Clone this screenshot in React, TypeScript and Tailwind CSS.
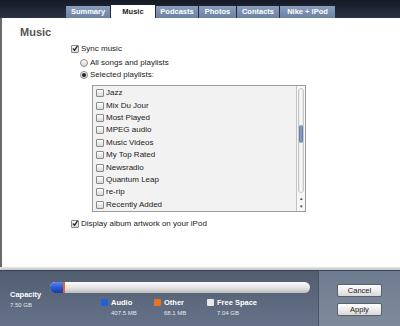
import React from "react";

const tabs = [
  { name: "Summary", w: "w-[44px]" },
  { name: "Music", w: "w-[44px]" },
  { name: "Podcasts", w: "w-[42px]" },
  { name: "Photos", w: "w-[37px]" },
  { name: "Contacts", w: "w-[42px]" },
  { name: "Nike + iPod", w: "w-[55px]" },
];

const playlists = [
  "Jazz",
  "Mix Du Jour",
  "Most Played",
  "MPEG audio",
  "Music Videos",
  "My Top Rated",
  "Newsradio",
  "Quantum Leap",
  "re-rip",
  "Recently Added",
];

function CheckBox({ checked }: { checked?: boolean }) {
  return (
    <span className="w-[8px] h-[8px] border border-[#8a8a8a] rounded-[1px] bg-gradient-to-b from-white to-[#d8d8d8] flex items-center justify-center shrink-0">
      {checked && (
        <svg width="7" height="7" viewBox="0 0 7 7">
          <path d="M1 3.5 L3 5.5 L6.5 0.5" stroke="#1d2a44" strokeWidth="1.6" fill="none" />
        </svg>
      )}
    </span>
  );
}

function Radio({ on }: { on?: boolean }) {
  return (
    <span className="w-[8px] h-[8px] rounded-full border border-[#8a8a8a] bg-gradient-to-b from-white to-[#d5d5d5] flex items-center justify-center shrink-0">
      {on && <span className="w-[4px] h-[4px] rounded-full bg-[#222]" />}
    </span>
  );
}

function Legend({ color, label, size }: { color: string; label: string; size: string }) {
  return (
    <div className="flex gap-[3px] w-[53px]">
      <span className={`w-[7px] h-[7px] mt-[1px] rounded-[1px] ${color}`} />
      <div className="flex flex-col">
        <span className="text-[7.5px] font-bold text-white leading-[9px]">{label}</span>
        <span className="text-[6px] text-[#e4e8ee] leading-[8px] mt-[2px]">{size}</span>
      </div>
    </div>
  );
}

export default function App() {
  return (
    <div className="w-[400px] h-[326px] flex flex-col bg-white overflow-hidden" style={{ fontFamily: '"Liberation Sans", Arial, sans-serif' }}>
      {/* tab strip */}
      <div className="h-[18px] bg-gradient-to-b from-[#151a26] to-[#2b3244] flex items-end pl-[66px] gap-[1px] shrink-0">
        {tabs.map((t) =>
          t.name === "Music" ? (
            <div key={t.name} className={`${t.w} h-[13px] bg-white text-[#1e1e1e] text-[7.5px] font-bold flex items-center justify-center`}>
              {t.name}
            </div>
          ) : (
            <div key={t.name} className={`${t.w} h-[12px] bg-gradient-to-b from-[#8a9dbb] to-[#6c82a4] text-white text-[7.5px] font-bold flex items-center justify-center`}>
              {t.name}
            </div>
          )
        )}
      </div>

      {/* main pane */}
      <div className="flex-1 border-l-2 border-[#6a6a6a] flex flex-col text-[#1a1a1a] text-[8px]">
        <div className="pl-[18px] pt-[8px] text-[11px] font-bold text-[#555] leading-[13px]">Music</div>

        <div className="pl-[69px] flex flex-col">
          <div className="flex items-center gap-[2px] mt-[4px] h-[11px]">
            <CheckBox checked />
            <span>Sync music</span>
          </div>
          <div className="pl-[9px] flex flex-col">
            <div className="flex items-center gap-[2px] h-[13px] mt-[2px]">
              <Radio />
              <span>All songs and playlists</span>
            </div>
            <div className="flex items-center gap-[2px] h-[12px]">
              <Radio on />
              <span>Selected playlists:</span>
            </div>

            <div className="ml-[12px] mt-[4px] w-[214px] h-[127px] border border-[#9c9c9c] bg-[#f2f2f2] flex">
              <div className="flex-1 flex flex-col pl-[3px] pt-[1px]">
                {playlists.map((p) => (
                  <div key={p} className="flex items-center gap-[2px] h-[12.5px]">
                    <CheckBox />
                    <span>{p}</span>
                  </div>
                ))}
              </div>
              {/* scrollbar */}
              <div className="w-[9px] border-l border-[#c4c4c4] bg-[#f6f6f6] flex flex-col items-center py-[2px]">
                <div className="w-[6px] flex-1 rounded-[3px] bg-gradient-to-r from-[#e2e2e2] via-white to-[#e2e2e2] border border-[#c8c8c8] flex flex-col pt-[36px]">
                  <div className="h-[18px] rounded-[3px] bg-gradient-to-r from-[#5873a3] via-[#8fa7cf] to-[#5873a3]" />
                </div>
                <div className="flex flex-col items-center gap-[3px] mt-[3px] text-[5px] leading-[5px] text-[#444]">
                  <span>▴</span>
                  <span>▾</span>
                </div>
              </div>
            </div>
          </div>

          <div className="flex items-center gap-[2px] mt-[6px] h-[11px]">
            <CheckBox checked />
            <span>Display album artwork on your iPod</span>
          </div>
        </div>
      </div>

      <div className="h-[3px] bg-gradient-to-b from-[#e6e6e6] to-[#c6c6c6] shrink-0" />

      {/* capacity panel */}
      <div className="h-[56px] flex shrink-0 border-t border-[#3a4252]">
        <div className="w-[318px] bg-gradient-to-b from-[#515d70] to-[#667288] flex pt-[11px] pl-[10px]">
          <div className="flex flex-col w-[40px] pt-[8px]">
            <span className="text-[7.5px] font-bold text-white leading-[9px]">Capacity</span>
            <span className="text-[6px] text-[#e4e8ee] leading-[8px] mt-[2px]">7.50 GB</span>
          </div>
          <div className="flex flex-col">
            <div className="w-[260px] h-[11px] rounded-full bg-gradient-to-b from-[#fafafa] via-[#e6e6e6] to-[#bdbdbd] flex overflow-hidden">
              <div className="w-[13px] h-full bg-gradient-to-b from-[#5d86e8] via-[#2a5ad6] to-[#1a3c9e]" />
              <div className="w-[2px] h-full bg-[#e5661a]" />
            </div>
            <div className="flex pl-[51px] mt-[5px]">
              <Legend color="bg-[#1f5fe0]" label="Audio" size="407.5 MB" />
              <Legend color="bg-[#e8731e]" label="Other" size="68.1 MB" />
              <Legend color="bg-[#e8e8e8]" label="Free Space" size="7.04 GB" />
            </div>
          </div>
        </div>
        <div className="flex-1 bg-gradient-to-b from-[#6f7b8e] to-[#7f8b9d] border-l border-[#4a5466] flex flex-col items-center pt-[13px] gap-[6px]">
          <button className="w-[45px] h-[13px] rounded-[2px] bg-gradient-to-b from-white to-[#d9d9d9] border border-[#5a6070] text-[7.5px] text-[#222] leading-[11px]">Cancel</button>
          <button className="w-[45px] h-[13px] rounded-[2px] bg-gradient-to-b from-white to-[#d9d9d9] border border-[#5a6070] text-[7.5px] text-[#222] leading-[11px]">Apply</button>
        </div>
      </div>
    </div>
  );
}
